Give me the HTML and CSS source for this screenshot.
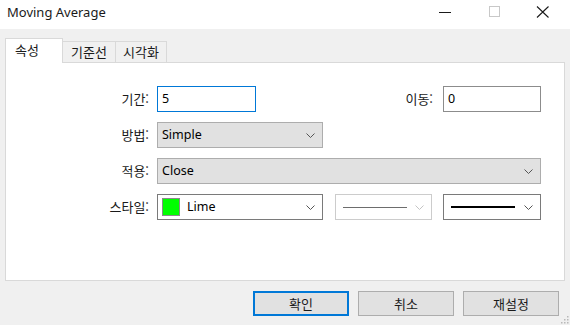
FILE: index.html
```html
<!DOCTYPE html>
<html lang="ko">
<head>
<meta charset="utf-8">
<link rel="stylesheet" href="styles.css">
</head>
<body>
<div class="window">
  <div class="titlebar">
    <span class="title">Moving Average</span>
    <div class="controls">
      <span class="ctl"><svg width="13" height="13" viewBox="0 0 13 13"><line x1="0" y1="6.5" x2="12" y2="6.5" stroke="#1a1a1a" stroke-width="1"/></svg></span>
      <span class="ctl"><svg width="12" height="12" viewBox="0 0 12 12"><rect x="0.5" y="0.5" width="10" height="10" fill="none" stroke="#c8c8c8" stroke-width="1"/></svg></span>
      <span class="ctl"><svg width="14" height="12" viewBox="0 0 14 12"><path d="M1 0.5 L12.5 11.5 M12.5 0.5 L1 11.5" stroke="#1a1a1a" stroke-width="1.1" fill="none"/></svg></span>
    </div>
  </div>

  <div class="tabs">
    <div class="tab active">속성</div>
    <div class="tab">기준선</div>
    <div class="tab">시각화</div>
  </div>

  <div class="panel">
    <div class="form">
      <label class="lbl">기간:</label>
      <div class="cell"><div class="input focus">5</div></div>
      <label class="lbl lbl-shift">이동:</label>
      <div class="cell"><div class="input grayb">0</div></div>

      <label class="lbl">방법:</label>
      <div class="cell"><div class="select w166">Simple<svg class="chev" width="9" height="5" viewBox="0 0 9 5"><polyline points="0.5,0.5 4.5,4.5 8.5,0.5" fill="none" stroke="#555" stroke-width="1"/></svg></div></div>
      <div class="cell"></div>
      <div class="cell"></div>

      <label class="lbl">적용:</label>
      <div class="cell span3"><div class="select full">Close<svg class="chev" width="9" height="5" viewBox="0 0 9 5"><polyline points="0.5,0.5 4.5,4.5 8.5,0.5" fill="none" stroke="#555" stroke-width="1"/></svg></div></div>

      <label class="lbl">스타일:</label>
      <div class="cell"><div class="combo w166"><span class="swatch"></span>Lime<svg class="chev" width="9" height="5" viewBox="0 0 9 5"><polyline points="0.5,0.5 4.5,4.5 8.5,0.5" fill="none" stroke="#555" stroke-width="1"/></svg></div></div>
      <div class="cell"><div class="combo linebox disabled"><span class="line thin"></span><svg class="chev" width="9" height="5" viewBox="0 0 9 5"><polyline points="0.5,0.5 4.5,4.5 8.5,0.5" fill="none" stroke="#c4c4c4" stroke-width="1"/></svg></div></div>
      <div class="cell"><div class="combo linebox wide"><span class="line thick"></span><svg class="chev" width="9" height="5" viewBox="0 0 9 5"><polyline points="0.5,0.5 4.5,4.5 8.5,0.5" fill="none" stroke="#555" stroke-width="1"/></svg></div></div>
    </div>
  </div>

  <div class="footer">
    <button class="btn default">확인</button>
    <button class="btn">취소</button>
    <button class="btn">재설정</button>
    <svg class="grip" width="10" height="10" viewBox="0 0 10 10">
      <rect x="8" y="2" width="1.5" height="1.5" fill="#b8b8b8"/>
      <rect x="5" y="5" width="1.5" height="1.5" fill="#b8b8b8"/>
      <rect x="8" y="5" width="1.5" height="1.5" fill="#b8b8b8"/>
      <rect x="2" y="8" width="1.5" height="1.5" fill="#b8b8b8"/>
      <rect x="5" y="8" width="1.5" height="1.5" fill="#b8b8b8"/>
      <rect x="8" y="8" width="1.5" height="1.5" fill="#b8b8b8"/>
    </svg>
  </div>
</div>
</body>
</html>
```

FILE: styles.css
```css
* { box-sizing: border-box; }
html, body {
  margin: 0;
  padding: 0;
}
body {
  width: 570px;
  height: 325px;
  background: #f0f0f0;
  font-family: "Segoe UI", "Noto Sans", "Noto Sans CJK KR", sans-serif;
  font-size: 12.5px;
  color: #000;
  overflow: hidden;
}
.window {
  position: relative;
  width: 570px;
  height: 325px;
}
.titlebar {
  height: 29px;
  background: #fff;
  display: flex;
  align-items: center;
  justify-content: space-between;
}
.title {
  padding-left: 7px;
  font-size: 13px;
  color: #1a1a1a;
  line-height: 16px;
  margin-top: -6px;
}
.controls {
  display: flex;
  align-items: center;
  height: 100%;
  margin-top: -5px;
}
.ctl {
  width: 50px;
  display: flex;
  justify-content: center;
}
.ctl:last-child { padding-right: 4px; }

.tabs {
  display: flex;
  align-items: flex-end;
  margin-top: 9px;
  padding-left: 5px;
  height: 24px;
  position: relative;
  z-index: 2;
}
.tab {
  height: 21px;
  border: 1px solid #d9d9d9;
  border-bottom: none;
  background: #f0f0f0;
  font-family: "Noto Sans CJK KR", sans-serif;
  font-size: 13px;
  line-height: 19px;
  padding: 0 4px;
  color: #1a1a1a;
  margin-left: -1px;
}
.tab:nth-child(2) { width: 53px; text-align: center; }
.tab:nth-child(3) { width: 52px; text-align: center; }
.tab.active {
  height: 25px;
  width: 58px;
  background: #fff;
  margin-left: 0;
  margin-bottom: -1px;
  padding-left: 9px;
  line-height: 21px;
  border-color: #d9d9d9;
  position: relative;
  z-index: 3;
}
.tab.active + .tab { margin-left: 0; border-left: none; }

.panel {
  margin: 0 5px;
  height: 219px;
  background: #fff;
  border: 1px solid #d9d9d9;
  padding-top: 23px;
}
.form {
  display: grid;
  grid-template-columns: 151px 178px 108px 98px;
  grid-template-rows: 26px 26px 26px 26px;
  row-gap: 10px;
  align-items: center;
}
.lbl {
  text-align: right;
  padding-right: 8px;
  font-family: "Noto Sans CJK KR", sans-serif;
  font-size: 13px;
  color: #1a1a1a;
  line-height: 16px;
}
.lbl-shift { padding-right: 10px; }
.cell { display: flex; align-items: center; height: 100%; }
.span3 { grid-column: 2 / span 3; }

.input {
  width: 99px;
  height: 26px;
  border: 1px solid #7a7a7a;
  background: #fff;
  padding-left: 4px;
  line-height: 23px;
}
.input.focus { border-color: #0078d7; }
.input.grayb { width: 98px; border-color: #8c8c8c; }

.select, .combo {
  height: 26px;
  display: flex;
  align-items: center;
  position: relative;
  padding-left: 4px;
  line-height: 16px;
}
.select {
  background: #e1e1e1;
  border: 1px solid #adadad;
}
.combo {
  background: #fff;
  border: 1px solid #7a7a7a;
}
.w166 { width: 166px; }
.full { width: 384px; }
.chev {
  position: absolute;
  right: 7px;
  top: 10px;
}
.swatch {
  width: 18px;
  height: 18px;
  background: #00ff00;
  border: 1px solid #8a8a8a;
  margin-right: 7px;
}
.linebox { width: 97px; padding-left: 7px; }
.linebox.wide { width: 98px; }
.linebox.disabled { border-color: #cccccc; }
.line { display: block; width: 64px; }
.line.thin { height: 1px; background: #6d6d6d; }
.line.thick { height: 2px; background: #000; }

.footer {
  display: flex;
  justify-content: flex-end;
  gap: 9px;
  padding-right: 11px;
  margin-top: 10px;
}
.btn {
  width: 96px;
  height: 25px;
  background: #e1e1e1;
  border: 1px solid #adadad;
  font-family: "Noto Sans CJK KR", sans-serif;
  font-size: 13px;
  color: #1a1a1a;
  padding: 0;
  line-height: 16px;
}
.btn.default {
  border: 2px solid #0078d7;
}
.grip {
  position: absolute;
  right: 1px;
  bottom: 1px;
}
```
